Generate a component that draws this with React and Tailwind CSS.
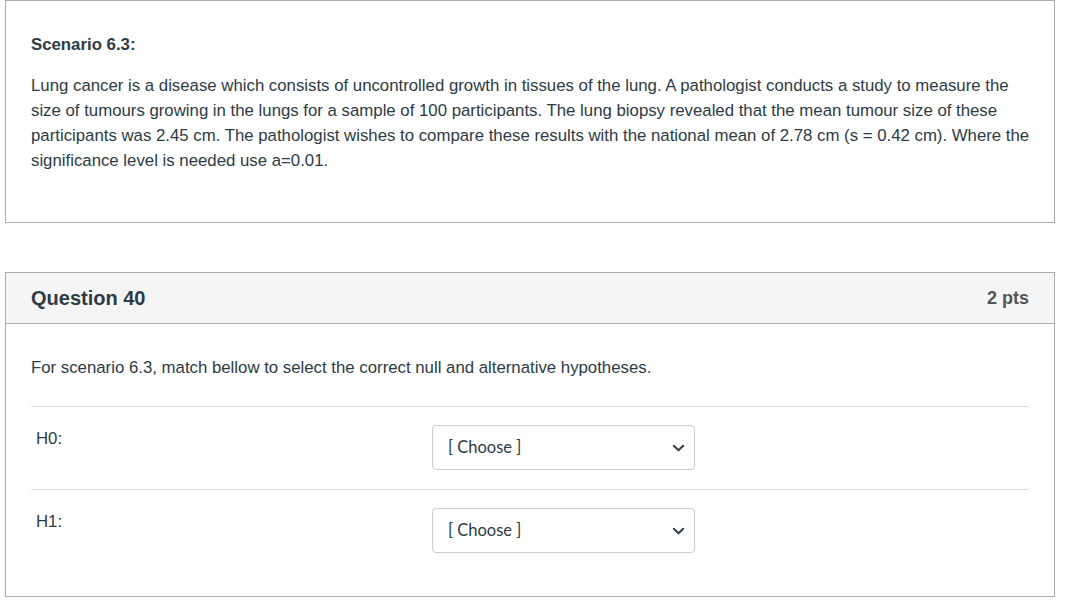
import React from "react";

const FONT = { fontFamily: "Arial, 'Liberation Sans', sans-serif" };

function ChooseSelect() {
  return (
    <div
      className="relative flex h-[45px] w-[263px] items-center rounded-[4px] border border-[#c7cdd1] bg-white pl-[15px] text-[16.5px] text-[#2d3b45]"
      style={{ fontFamily: "Lato, 'Open Sans', sans-serif" }}
    >
      <span>[ Choose ]</span>
      <svg
        className="absolute right-[9px] top-1/2 -translate-y-1/2"
        width="13"
        height="8"
        viewBox="0 0 13 8"
        fill="none"
      >
        <path
          d="M1.8 1.8 L6.5 6.2 L11.2 1.8"
          stroke="#2d3b45"
          strokeWidth="2"
          strokeLinecap="round"
          strokeLinejoin="round"
        />
      </svg>
    </div>
  );
}

function AnswerRow({ label }) {
  return (
    <div className="flex border-t border-[#dddddd] pt-[18px] pb-[19px]">
      <div className="w-[401px] pl-[5px] pt-px leading-[25px]">{label}</div>
      <ChooseSelect />
    </div>
  );
}

export default function App() {
  return (
    <div
      className="min-h-screen bg-white pl-[5px] text-[16.8px] text-[#2d3b45]"
      style={FONT}
    >
      <div className="w-[1050px] border border-[#adadad] pl-[25px] pr-[22px] pt-[32px] pb-[49px]">
        <p className="mb-4 font-bold leading-[24px]">Scenario 6.3:</p>
        <p className="leading-[25px]">
          Lung cancer is a disease which consists of uncontrolled growth in
          tissues of the lung. A pathologist conducts a study to measure the
          size of tumours growing in the lungs for a sample of 100
          participants. The lung biopsy revealed that the mean tumour size of
          these participants was 2.45 cm. The pathologist wishes to compare
          these results with the national mean of 2.78 cm (s = 0.42 cm). Where
          the significance level is needed use a=0.01.
        </p>
      </div>

      <div className="mt-[49px] w-[1050px] border border-[#adadad]">
        <div className="flex h-[51px] items-center justify-between border-b border-[#adadad] bg-[#f5f5f5] px-[25px]">
          <span className="text-[20px] font-bold">Question 40</span>
          <span className="text-[18px] font-bold text-[#555555]">2 pts</span>
        </div>
        <div className="px-[25px] pt-[31px] pb-[24px]">
          <p className="mb-[26px] leading-[25px]">
            For scenario 6.3, match bellow to select the correct null and
            alternative hypotheses.
          </p>
          <AnswerRow label="H0:" />
          <AnswerRow label="H1:" />
        </div>
      </div>
    </div>
  );
}
